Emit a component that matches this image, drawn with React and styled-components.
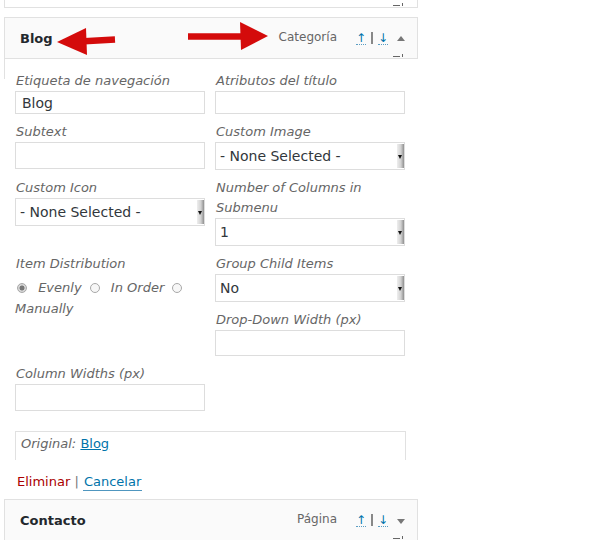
import styled, { createGlobalStyle } from 'styled-components'

const GlobalStyle = createGlobalStyle`
  body {
    margin: 0;
    background: #fff;
    font-family: "DejaVu Sans", Verdana, sans-serif;
    color: #333;
  }
`

const Canvas = styled.div`
  position: relative;
  height: 540px;
  overflow: hidden;
`

const MenuList = styled.div`
  width: 414px;
  margin-left: 4px;
`

const PrevItem = styled.div`
  position: relative;
  box-sizing: border-box;
  height: 8px;
  margin-bottom: 9px;
  border: 1px solid #e1e1e1;
  border-top: none;
`

const ItemBar = styled.div`
  position: relative;
  box-sizing: border-box;
  display: flex;
  align-items: center;
  height: 42px;
  margin-top: ${p => p.$gap || 0}px;
  padding: 0 12px 0 15px;
  border: 1px solid #e1e1e1;
  background: #fafafa;
`

const BarHandle = styled.span`
  position: absolute;
  right: 17px;
  bottom: 1px;
  width: 7px;
  height: 1px;
  background: #666;
  &::after {
    content: '';
    position: absolute;
    left: 9px;
    bottom: 0;
    width: 1px;
    height: 3px;
    background: #666;
  }
`

const ItemTitle = styled.span`
  flex: 1;
  padding-top: 1px;
  font-size: 13px;
  font-weight: bold;
  color: #23282d;
`

const ItemType = styled.span`
  margin-right: 19px;
  padding-bottom: 2px;
  font-size: 12px;
  color: #666;
`

const MoveGroup = styled.span`
  display: flex;
  align-items: center;
  gap: 4px;
  font-size: 12px;
`

const MoveLink = styled.a`
  display: inline-block;
  width: 10px;
  line-height: 12px;
  text-align: center;
  color: #0073aa;
  border-bottom: 1px dotted #5b9dc2;
`

const Pipe = styled.span`
  display: inline-block;
  width: 2px;
  height: 12px;
  margin: 0 1px;
  background: #888;
`

const Toggle = styled.span`
  width: 0;
  height: 0;
  margin-left: 9px;
  border-left: 4px solid transparent;
  border-right: 4px solid transparent;
  ${p => p.$open
    ? 'border-bottom: 5px solid #777;'
    : 'border-top: 5px solid #777; margin-top: 2px;'}
`

const ItemSettings = styled.div`
  position: relative;
  padding: 12px 0 0 11px;
  &::before {
    content: '';
    position: absolute;
    left: 0;
    top: 0;
    height: 20px;
    border-left: 1px solid #e1e1e1;
  }
`

const FieldGrid = styled.div`
  display: grid;
  grid-template-columns: 190px 190px;
  column-gap: 10px;
  row-gap: 8px;
  align-items: start;
`

const Field = styled.div`
  grid-column: ${p => p.$col};
  grid-row: ${p => p.$row};
`

const FieldLabel = styled.div`
  padding-left: 1px;
  font-size: 13px;
  font-style: italic;
  line-height: 20px;
  color: #666;
`

const TextBox = styled.input`
  display: block;
  box-sizing: border-box;
  width: 190px;
  height: ${p => p.$h || 26}px;
  margin: 0;
  padding: 0 6px;
  border: 1px solid #ddd;
  background: #fff;
  font: 14px "DejaVu Sans", Verdana, sans-serif;
  color: #32373c;
  outline: none;
`

const SelectBox = styled.div`
  display: flex;
  align-items: center;
  box-sizing: border-box;
  width: 190px;
  height: 28px;
  padding-left: 4px;
  border: 1px solid #ddd;
  background: #fff;
  font-size: 14px;
  color: #32373c;
`

const SelectValue = styled.span`
  flex: 1;
`

const SelectGrip = styled.span`
  position: relative;
  align-self: stretch;
  width: 7px;
  margin: 1px 0;
  background: linear-gradient(to right, #eeeeee, #d2d2d2 55%, #8f8f8f);
  &::after {
    content: '';
    position: absolute;
    left: 1px;
    top: 50%;
    margin-top: -1px;
    border-left: 2.5px solid transparent;
    border-right: 2.5px solid transparent;
    border-top: 4px solid #111;
  }
`

const RadioRow = styled.div`
  padding-top: 3px;
  font-size: 13px;
  font-style: italic;
  line-height: 21px;
  color: #666;
`

const Radio = styled.span`
  display: inline-block;
  box-sizing: border-box;
  width: 10px;
  height: 10px;
  margin: 0 7px 0 4px;
  border: 1px solid #a8a8a8;
  border-radius: 50%;
  vertical-align: -1px;
  background: ${p => p.$checked
    ? 'radial-gradient(circle, #777 0 2.2px, #d6d6d6 2.8px)'
    : '#f7f7f7'};
  &:first-child {
    margin-left: 2px;
  }
`

const OriginalBox = styled.div`
  box-sizing: border-box;
  width: 391px;
  height: 29px;
  margin-top: 20px;
  padding: 2px 5px 0;
  border: 1px solid #e1e1e1;
  border-bottom: none;
  font-size: 13px;
  line-height: 20px;
`

const OriginalLabel = styled.span`
  font-style: italic;
  color: #666;
`

const TextLink = styled.a`
  color: #0073aa;
  text-decoration: underline;
`

const ActionRow = styled.div`
  margin: 12px 0 0 2px;
  font-size: 13px;
  line-height: 20px;
  color: #777;
`

const DeleteLink = styled.a`
  color: #a00;
`

const CancelLink = styled.a`
  padding: 0 1px 1px;
  color: #0073aa;
  border-bottom: 1px solid #4f96bf;
`

const Annotations = styled.svg`
  position: absolute;
  left: 0;
  top: 0;
  pointer-events: none;
`

function MenuItemBar({ title, type, open, gap }) {
  return (
    <ItemBar $gap={gap}>
      <ItemTitle>{title}</ItemTitle>
      <ItemType>{type}</ItemType>
      <MoveGroup>
        <MoveLink>↑</MoveLink>
        <Pipe />
        <MoveLink>↓</MoveLink>
      </MoveGroup>
      <Toggle $open={open} />
      <BarHandle />
    </ItemBar>
  )
}

function Select({ value }) {
  return (
    <SelectBox>
      <SelectValue>{value}</SelectValue>
      <SelectGrip />
    </SelectBox>
  )
}

export default function App() {
  return (
    <Canvas>
      <GlobalStyle />
      <MenuList>
        <PrevItem>
          <BarHandle />
        </PrevItem>

        <MenuItemBar title="Blog" type="Categoría" open />

        <ItemSettings>
          <FieldGrid>
            <Field $col={1} $row={1}>
              <FieldLabel>Etiqueta de navegación</FieldLabel>
              <TextBox $h={23} defaultValue="Blog" />
            </Field>
            <Field $col={2} $row={1}>
              <FieldLabel>Atributos del título</FieldLabel>
              <TextBox $h={23} />
            </Field>

            <Field $col={1} $row={2}>
              <FieldLabel>Subtext</FieldLabel>
              <TextBox $h={27} />
            </Field>
            <Field $col={2} $row={2}>
              <FieldLabel>Custom Image</FieldLabel>
              <Select value="- None Selected -" />
            </Field>

            <Field $col={1} $row={3}>
              <FieldLabel>Custom Icon</FieldLabel>
              <Select value="- None Selected -" />
            </Field>
            <Field $col={2} $row={3}>
              <FieldLabel>Number of Columns in Submenu</FieldLabel>
              <Select value="1" />
            </Field>

            <Field $col={1} $row="4 / span 2">
              <FieldLabel>Item Distribution</FieldLabel>
              <RadioRow>
                <Radio $checked /> Evenly <Radio /> In Order <Radio /> Manually
              </RadioRow>
            </Field>
            <Field $col={2} $row={4}>
              <FieldLabel>Group Child Items</FieldLabel>
              <Select value="No" />
            </Field>

            <Field $col={2} $row={5}>
              <FieldLabel>Drop-Down Width (px)</FieldLabel>
              <TextBox />
            </Field>

            <Field $col={1} $row={6}>
              <FieldLabel>Column Widths (px)</FieldLabel>
              <TextBox $h={27} />
            </Field>
          </FieldGrid>

          <OriginalBox>
            <OriginalLabel>Original:</OriginalLabel> <TextLink>Blog</TextLink>
          </OriginalBox>

          <ActionRow>
            <DeleteLink>Eliminar</DeleteLink> | <CancelLink>Cancelar</CancelLink>
          </ActionRow>
        </ItemSettings>

        <MenuItemBar title="Contacto" type="Página" gap={7} />
      </MenuList>

      <Annotations width="300" height="60" viewBox="0 0 300 60">
        <line x1="115" y1="39.5" x2="80" y2="41.5" stroke="#d40b0b" strokeWidth="6.5" />
        <polygon points="57,42 86,28 87,55" fill="#d40b0b" />
        <line x1="188" y1="36.5" x2="245" y2="36.5" stroke="#d40b0b" strokeWidth="6.5" />
        <polygon points="268,36 240,22 241,50" fill="#d40b0b" />
      </Annotations>
    </Canvas>
  )
}
